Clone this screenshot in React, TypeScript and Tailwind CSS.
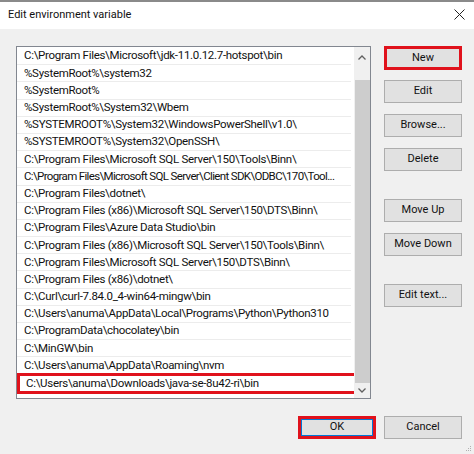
import React from 'react';

const paths = [
  'C:\\Program Files\\Microsoft\\jdk-11.0.12.7-hotspot\\bin',
  '%SystemRoot%\\system32',
  '%SystemRoot%',
  '%SystemRoot%\\System32\\Wbem',
  '%SYSTEMROOT%\\System32\\WindowsPowerShell\\v1.0\\',
  '%SYSTEMROOT%\\System32\\OpenSSH\\',
  'C:\\Program Files\\Microsoft SQL Server\\150\\Tools\\Binn\\',
  'C:\\Program Files\\Microsoft SQL Server\\Client SDK\\ODBC\\170\\Tool...',
  'C:\\Program Files\\dotnet\\',
  'C:\\Program Files (x86)\\Microsoft SQL Server\\150\\DTS\\Binn\\',
  'C:\\Program Files\\Azure Data Studio\\bin',
  'C:\\Program Files (x86)\\Microsoft SQL Server\\150\\Tools\\Binn\\',
  'C:\\Program Files\\Microsoft SQL Server\\150\\DTS\\Binn\\',
  'C:\\Program Files (x86)\\dotnet\\',
  'C:\\Curl\\curl-7.84.0_4-win64-mingw\\bin',
  'C:\\Users\\anuma\\AppData\\Local\\Programs\\Python\\Python310',
  'C:\\ProgramData\\chocolatey\\bin',
  'C:\\MinGW\\bin',
  'C:\\Users\\anuma\\AppData\\Roaming\\nvm',
  'C:\\Users\\anuma\\Downloads\\java-se-8u42-ri\\bin',
];

const font = "font-['Segoe_UI',Roboto,sans-serif]";

function Btn({ label, className = '' }: { label: string; className?: string }) {
  return (
    <div
      className={`h-[23px] w-[78px] flex items-center justify-center bg-[#e1e1e1] border border-[#adadad] text-[11px] text-[#111] ${className}`}
    >
      {label}
    </div>
  );
}

export default function App() {
  return (
    <div className={`w-[474px] h-[454px] bg-[#f0f0f0] flex flex-col border-t-2 border-[#8a8a8a] ${font}`}>
      {/* title bar */}
      <div className="h-[27px] bg-white flex items-center justify-between pl-[8px] pr-[8px] shrink-0">
        <span className="text-[11px] text-[#111] mt-[-1px]">Edit environment variable</span>
        <svg width="11" height="11" viewBox="0 0 11 11" className="mt-[-2px] mr-[1px]">
          <path d="M0.5 0.5 L10.5 10.5 M10.5 0.5 L0.5 10.5" stroke="#222" strokeWidth="1" />
        </svg>
      </div>

      <div className="flex pl-[16px] pt-[17px] gap-[13px]">
        {/* list */}
        <div className="w-[355px] h-[353px] bg-white border border-[#828790] flex overflow-hidden">
          <div className="flex-1 min-w-0 flex flex-col pt-[1px]">
            {paths.map((p, i) => (
              <div
                key={i}
                className={`h-[17.2px] shrink-0 flex items-center pl-[7px] text-[11.5px] text-[#111] whitespace-nowrap overflow-hidden ${
                  i === 7 ? 'tracking-[-0.65px]' : 'tracking-[-0.3px]'
                } ${
                  i === paths.length - 1
                    ? 'outline-[3px] outline-solid outline-[#e0121c] -outline-offset-[1px] ml-[2px] pl-[5px] mr-[-1px]'
                    : 'border-b border-[#ececec] mr-[3px]'
                }`}
              >
                {p}
              </div>
            ))}
          </div>
          {/* scrollbar */}
          <div className="w-[16px] shrink-0 bg-[#f0f0f0] flex flex-col items-center">
            <div className="h-[17px] flex items-center justify-center shrink-0 mt-[2px]">
              <svg width="8" height="5" viewBox="0 0 8 5">
                <path d="M0.5 4.5 L4 1 L7.5 4.5" stroke="#606060" strokeWidth="1.3" fill="none" />
              </svg>
            </div>
            <div className="w-[15px] flex-1 bg-[#cdcdcd] mt-[14px]" />
            <div className="h-[15px] flex items-center justify-center shrink-0">
              <svg width="8" height="5" viewBox="0 0 8 5">
                <path d="M0.5 0.5 L4 4 L7.5 0.5" stroke="#606060" strokeWidth="1.3" fill="none" />
              </svg>
            </div>
          </div>
        </div>

        {/* buttons */}
        <div className="flex flex-col gap-[11px] pt-[1px]">
          <div className="h-[24px] w-[78px] flex items-center justify-center bg-[#e1e1e1] border-[3px] border-[#e0121c] text-[11px] text-[#111] mt-[-1px]">
            New
          </div>
          <Btn label="Edit" className="mt-[-1px]" />
          <Btn label="Browse..." />
          <Btn label="Delete" />
          <Btn label="Move Up" className="mt-[17px]" />
          <Btn label="Move Down" />
          <Btn label="Edit text..." className="mt-[17px]" />
        </div>
      </div>

      {/* bottom buttons */}
      <div className="flex justify-end gap-[8px] pr-[12px] mt-[17px]">
        <div className="h-[23px] w-[78px] flex items-center justify-center bg-[#e1e1e1] border-[3px] border-[#e0121c] shadow-[inset_0_0_0_1px_#0078d7] text-[11px] text-[#111]">
          OK
        </div>
        <Btn label="Cancel" />
      </div>

      <div className="flex-1 flex justify-end items-end pr-[2px] pb-[2px]">
        <svg width="7" height="7" viewBox="0 0 7 7">
          <rect x="5" y="1" width="1" height="1" fill="#b0b0b0" />
          <rect x="3" y="3" width="1" height="1" fill="#b0b0b0" />
          <rect x="5" y="3" width="1" height="1" fill="#b0b0b0" />
          <rect x="1" y="5" width="1" height="1" fill="#b0b0b0" />
          <rect x="3" y="5" width="1" height="1" fill="#b0b0b0" />
          <rect x="5" y="5" width="1" height="1" fill="#b0b0b0" />
        </svg>
      </div>
    </div>
  );
}
